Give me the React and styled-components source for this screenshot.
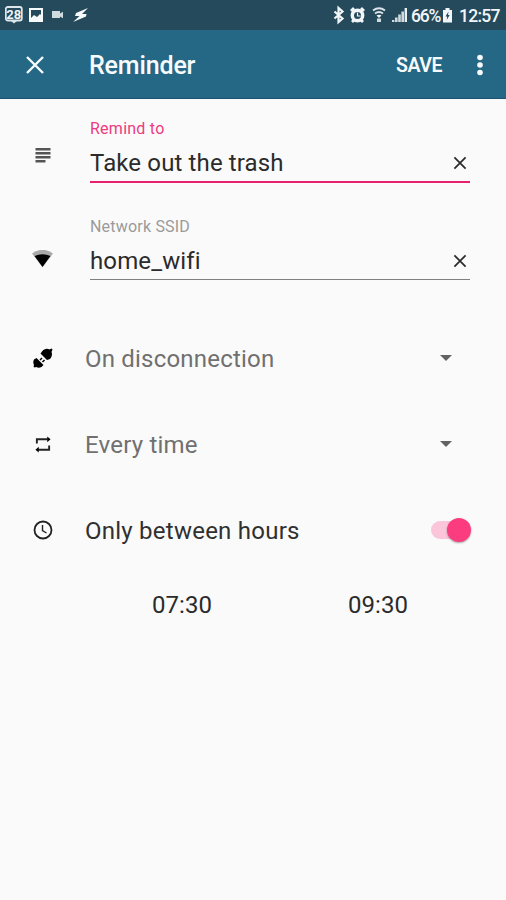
import React from "react";
import styled, { createGlobalStyle } from "styled-components";

const Global = createGlobalStyle`
  * { box-sizing: border-box; }
  body { margin: 0; background: #fafafa; }
`;

const Screen = styled.div`
  width: 506px;
  height: 900px;
  overflow: hidden;
  background: #fafafa;
  font-family: Roboto, sans-serif;
  color: #2b2b2b;
`;

const StatusBar = styled.div`
  height: 30px;
  padding: 0 5px;
  display: flex;
  align-items: center;
  justify-content: space-between;
  background: #254a5b;
  color: #f2f6f8;
`;

const StatusGroup = styled.div`
  display: flex;
  align-items: center;
  svg { display: block; flex: none; }
`;

const StatusText = styled.span`
  font-size: 17.5px;
  font-weight: 500;
  line-height: 30px;
  padding-top: 2px;
  white-space: nowrap;
  width: ${(p) => p.$width}px;
  letter-spacing: ${(p) => p.$spacing}px;
  margin-left: ${(p) => p.$left}px;
`;

const AppBar = styled.header`
  height: 69px;
  display: grid;
  grid-template-columns: 89px 1fr 59px 51px;
  align-items: center;
  background: #256885;
  border-bottom: 1px solid #1b5370;
  color: #f7fbfd;
`;

const IconButton = styled.button`
  border: 0;
  padding: 1px 0 0;
  background: none;
  color: inherit;
  display: flex;
  justify-content: center;
  width: ${(p) => p.$width}px;
  svg { display: block; }
`;

const Title = styled.h1`
  margin: 4px 0 0;
  font-size: 25px;
  line-height: 32px;
  font-weight: 500;
  letter-spacing: -0.15px;
`;

const SaveButton = styled.button`
  border: 0;
  padding: 4px 0 0;
  background: none;
  color: inherit;
  font: 600 19.5px/28px Roboto, sans-serif;
  letter-spacing: -0.45px;
  text-align: left;
`;

const FieldRow = styled.div`
  height: 98px;
  padding-right: 36px;
  display: grid;
  grid-template-columns: 90px 1fr;
`;

const FieldIcon = styled.div`
  width: 85px;
  padding-top: ${(p) => p.$top}px;
  display: flex;
  justify-content: center;
  align-items: flex-start;
  svg { display: block; }
`;

const Field = styled.label`
  padding-top: 21px;
  display: block;
`;

const FieldLabel = styled.div`
  font-size: 16px;
  line-height: 18px;
  color: ${(p) => (p.$active ? "#ee3a80" : "#9a9a9a")};
  letter-spacing: ${(p) => p.$spacing}px;
`;

const FieldValue = styled.div`
  margin-top: 7px;
  height: ${(p) => (p.$active ? 38 : 37)}px;
  padding-right: 1px;
  display: flex;
  justify-content: space-between;
  border-bottom: ${(p) => (p.$active ? "2px solid #e8206f" : "1px solid #808080")};
  font-size: 24px;
  line-height: 37px;
  letter-spacing: ${(p) => p.$spacing}px;
`;

const OptionRow = styled.div`
  height: 86px;
  padding-right: 34px;
  margin-top: ${(p) => p.$gap || 0}px;
  display: grid;
  grid-template-columns: 85px 1fr auto;
  align-items: center;
`;

const OptionIcon = styled.div`
  width: 85px;
  display: flex;
  justify-content: center;
  svg { display: block; }
`;

const OptionText = styled.div`
  padding-top: 1px;
  font-size: 24px;
  line-height: 30px;
  letter-spacing: ${(p) => p.$spacing}px;
  color: ${(p) => (p.$muted ? "#707070" : "#303030")};
`;

const Caret = styled.div`
  width: 12px;
  height: 6px;
  margin-right: 20px;
  background: #626262;
  clip-path: polygon(0 0, 100% 0, 50% 100%);
`;

const SwitchTrack = styled.div`
  width: 38px;
  height: 18px;
  border-radius: 9px;
  margin-right: 3px;
  display: flex;
  align-items: center;
  justify-content: flex-end;
  background: #fbc5da;
`;

const SwitchThumb = styled.div`
  flex: none;
  width: 24px;
  height: 24px;
  border-radius: 50%;
  margin-right: -2px;
  background: #fb3d80;
  box-shadow: 0 1px 2px rgba(0, 0, 0, 0.35);
`;

const Times = styled.div`
  height: 63px;
  margin: 0 30px 0 84px;
  display: grid;
  grid-template-columns: 1fr 1fr;
  align-items: center;
  text-align: center;
  font-size: 24px;
  line-height: 30px;
`;

function Cross({ size, stroke }) {
  return (
    <svg width={size} height={size} viewBox="0 0 20 20" fill="none" stroke="currentColor" strokeWidth={stroke}>
      <path d="M2 2 18 18M18 2 2 18" />
    </svg>
  );
}

const Clear = styled.span`
  width: 18px;
  display: flex;
  justify-content: center;
  align-items: center;
  height: 35px;
`;

function LeftStatusIcons() {
  return (
    <svg width="86" height="30" viewBox="0 0 86 30">
      <rect x="0.800" y="7" width="16" height="13.500" rx="2" fill="none" stroke="#dce5e9" strokeWidth="1.800" />
      <path d="M5.500 20.500h7L9 23.500z" fill="#dce5e9" />
      <text x="8.800" y="18.600" fontSize="13" fontWeight="700" textAnchor="middle" fill="#eef3f5">28</text>
      <path fillRule="evenodd" fill="#f7fafb" d="M24 8h14v14H24zM26 10v8l3-3 3 2 3-3 1 1v-5z" />
      <path fill="#cfdbdf" d="M47 11h8v2.500l3-1.800v6.600l-3-1.800V18h-8z" />
      <path fill="#f7fafb" d="M83 8 71 13l-1 3h4.500L68 22l13-5.500.5-2.500H77z" />
    </svg>
  );
}

function RightStatusIcons() {
  return (
    <svg width="76" height="30" viewBox="0 0 76 30">
      <path d="M1.500 11.500l8 7-4 3.500V8l4 3.500-8 7" fill="none" stroke="#f2f6f8" strokeWidth="2.200" />
      <circle cx="24.500" cy="15.500" r="5.200" fill="#254a5b" stroke="#f2f6f8" strokeWidth="3.400" />
      <path d="M18 11l3-3M31 11l-3-3M19 22l2-2M30 22l-2-2" stroke="#f2f6f8" strokeWidth="2.800" />
      <path d="M24.500 12.500v3.500h3" fill="none" stroke="#f2f6f8" strokeWidth="1.200" />
      <path d="M40 10.500q6-4.500 12 0M42 13.500q4-3 8 0" fill="none" stroke="#dce5e9" strokeWidth="1.900" />
      <path d="M46 18l-2.500-2.500q2.500-1.500 5 0z" fill="#f2f6f8" />
      <path d="M44 18.500h4V22h-4z" fill="#cfdbdf" />
      <path d="M59 20h2.400v2H59zM62 17.500h2.600V22H62zM65.200 14.500h2.600V22h-2.600zM68.400 11.500H71V22h-2.600z" fill="#cfdbdf" />
      <path d="M71.600 8H74v14h-2.400z" fill="#e9f0f2" />
    </svg>
  );
}

function Battery() {
  return (
    <svg width="11" height="30" viewBox="0 0 11 30">
      <path fill="#f2f6f8" d="M3.500 8h4v2H10V22.500H1V10h2.500z" />
      <path fill="#254a5b" d="M6.500 11.500 3.500 16.500h1.700l-.5 3.500 3-5H6z" />
    </svg>
  );
}

export default function App() {
  return (
    <Screen>
      <Global />
      <StatusBar>
        <StatusGroup><LeftStatusIcons /></StatusGroup>
        <StatusGroup>
          <RightStatusIcons />
          <StatusText $width={31} $left={2} $spacing={-1.2}>66%</StatusText>
          <Battery />
          <StatusText $width={42} $left={6} $spacing={-0.75}>12:57</StatusText>
        </StatusGroup>
      </StatusBar>

      <AppBar>
        <IconButton $width={70} aria-label="Close"><Cross size={20} stroke={2.4} /></IconButton>
        <Title>Reminder</Title>
        <SaveButton>SAVE</SaveButton>
        <IconButton $width={50} aria-label="More">
          <svg width="8" height="24" viewBox="0 0 8 24" fill="currentColor">
            <circle cx="4" cy="4.500" r="2.800" />
            <circle cx="4" cy="12" r="2.800" />
            <circle cx="4" cy="19.500" r="2.800" />
          </svg>
        </IconButton>
      </AppBar>

      <FieldRow>
        <FieldIcon $top={49}>
          <svg width="16" height="15" viewBox="0 0 16 15" fill="#555">
            <path d="M.5 0h15v2.400H.5zM.5 4h15v2.400H.5zM.5 8h15v2.400H.5zM.5 12h10v2.400H.5z" />
          </svg>
        </FieldIcon>
        <Field>
          <FieldLabel $active $spacing={0.25}>Remind to</FieldLabel>
          <FieldValue $active $spacing={0.13}>
            Take out the trash
            <Clear><Cross size={14} stroke={2.5} /></Clear>
          </FieldValue>
        </Field>
      </FieldRow>

      <FieldRow>
        <FieldIcon $top={53}>
          <svg width="21" height="17" viewBox="0 0 21 17">
            <path d="M0 3.500Q10.500-4 21 3.500L10.500 17z" fill="#a9a9a9" />
            <path d="M2.500 6Q10.500 2.500 18.500 6L10.500 17z" fill="#000" />
          </svg>
        </FieldIcon>
        <Field>
          <FieldLabel $spacing={0.2}>Network SSID</FieldLabel>
          <FieldValue $spacing={0.13}>
            home_wifi
            <Clear><Cross size={14} stroke={2.5} /></Clear>
          </FieldValue>
        </Field>
      </FieldRow>

      <OptionRow $gap={20}>
        <OptionIcon>
          <svg width="20" height="20" viewBox="0 0 20 20">
            <path d="M1 11.500l2.500-1.500 1 1 5 5 1 1-2 2c-2 1-4 1-5 0L1.500 19.500.5 18.500 1 17c-1-2-1-3.500 0-5.500z" />
            <path d="M9 3.500c2-3 5.500-3.500 7.500-2L18.500.5l1 1L18.500 4c1 2 .5 4.500-1.500 7l-3 1L7.500 5.500z" />
            <path d="M7 12l2-2M9.500 14l2-2" stroke="#000" strokeWidth="1.500" />
          </svg>
        </OptionIcon>
        <OptionText $muted $spacing={0.2}>On disconnection</OptionText>
        <Caret />
      </OptionRow>

      <OptionRow>
        <OptionIcon>
          <svg width="16" height="17" viewBox="0 0 16 18">
            <path d="M1.500 8V3.500H13M14.500 10v4.500H3" fill="none" stroke="#222" strokeWidth="2" />
            <path d="M12.500.5l3.500 3-3.500 3zM3.500 11.500l-3.500 3 3.500 3z" fill="#000" />
          </svg>
        </OptionIcon>
        <OptionText $muted $spacing={0.2}>Every time</OptionText>
        <Caret />
      </OptionRow>

      <OptionRow>
        <OptionIcon>
          <svg width="20" height="20" viewBox="0 0 20 20" fill="none" stroke="#222">
            <circle cx="10" cy="10" r="8.500" strokeWidth="1.800" />
            <path d="M9.500 5v5.500l4 2.500" strokeWidth="1.400" />
          </svg>
        </OptionIcon>
        <OptionText $spacing={0.24}>Only between hours</OptionText>
        <SwitchTrack><SwitchThumb /></SwitchTrack>
      </OptionRow>

      <Times>
        <div>07:30</div>
        <div>09:30</div>
      </Times>
    </Screen>
  );
}
